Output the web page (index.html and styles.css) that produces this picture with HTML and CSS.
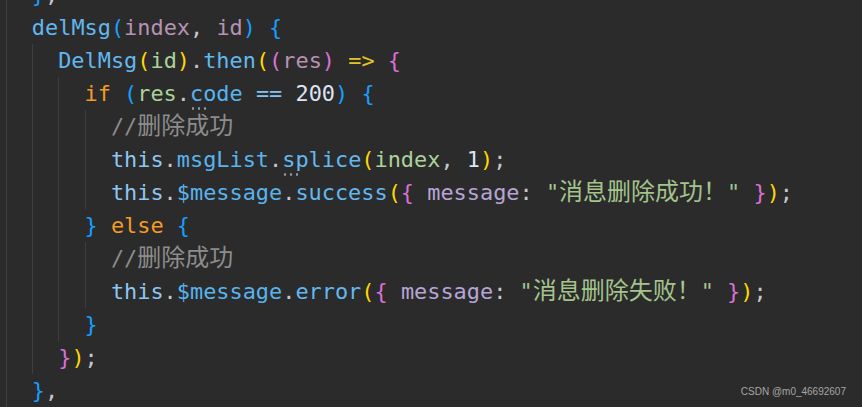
FILE: index.html
```html
<!DOCTYPE html>
<html lang="zh-CN">
<head>
<meta charset="utf-8">
<title>delMsg</title>
<link rel="stylesheet" href="styles.css">
</head>
<body>
<div class="editor">
  <div class="block">
    <div class="ln"><span class="b3">}</span><span class="p">,</span></div>
    <div class="ln"><span class="fn">delMsg</span><span class="b3">(</span><span class="pa">index</span><span class="p">, </span><span class="pa">id</span><span class="b3">)</span> <span class="b3">{</span></div>
    <div class="block">
      <div class="ln"><span class="fn">DelMsg</span><span class="b1">(</span><span class="va">id</span><span class="b1">)</span><span class="p">.</span><span class="fn">then</span><span class="b1">(</span><span class="b2">(</span><span class="pa">res</span><span class="b2">)</span> <span class="ar">=&gt;</span> <span class="b2">{</span></div>
      <div class="block">
        <div class="ln"><span class="kw">if</span> <span class="b3">(</span><span class="va">res</span><span class="p">.</span><span class="pr hint">code</span> <span class="op">==</span> <span class="nu">200</span><span class="b3">)</span> <span class="b3">{</span></div>
        <div class="block">
          <div class="ln"><span class="cm">//<span class="cjk">删除成功</span></span></div>
          <div class="ln"><span class="th">this</span><span class="p">.</span><span class="pr">msgList</span><span class="p">.</span><span class="fn hint">splice</span><span class="b1">(</span><span class="va">index</span><span class="p">, </span><span class="nu">1</span><span class="b1">)</span><span class="p">;</span></div>
          <div class="ln"><span class="th">this</span><span class="p">.</span><span class="pr">$message</span><span class="p">.</span><span class="fn">success</span><span class="b1">(</span><span class="b2">{</span> <span class="ke">message</span><span class="p">:</span> <span class="st">"<span class="cjk">消息删除成功！</span>"</span> <span class="b2">}</span><span class="b1">)</span><span class="p">;</span></div>
        </div>
        <div class="ln"><span class="b3">}</span> <span class="kw">else</span> <span class="b3">{</span></div>
        <div class="block">
          <div class="ln"><span class="cm">//<span class="cjk">删除成功</span></span></div>
          <div class="ln"><span class="th">this</span><span class="p">.</span><span class="pr">$message</span><span class="p">.</span><span class="fn">error</span><span class="b1">(</span><span class="b2">{</span> <span class="ke">message</span><span class="p">:</span> <span class="st">"<span class="cjk">消息删除失败！</span>"</span> <span class="b2">}</span><span class="b1">)</span><span class="p">;</span></div>
        </div>
        <div class="ln"><span class="b3">}</span></div>
      </div>
      <div class="ln"><span class="b2">}</span><span class="b1">)</span><span class="p">;</span></div>
    </div>
    <div class="ln"><span class="b3">}</span><span class="p">,</span></div>
  </div>
</div>
<div class="watermark">CSDN @m0_46692607</div>
</body>
</html>
```

FILE: styles.css
```css
html, body {
  margin: 0;
  padding: 0;
}

body {
  background: #2b2b2b;
  width: 862px;
  height: 407px;
  overflow: hidden;
}

.editor {
  margin-top: -22px;
  padding-left: 5.5px;
  font-family: "DejaVu Sans Mono", "Liberation Mono", monospace;
  font-size: 21.9px;
  line-height: 33px;
  color: #c8c8c8;
}

.block {
  border-left: 1px solid #3e3e3e;
  padding-left: calc(2ch - 1px);
}

.ln {
  white-space: pre;
  height: 33px;
}

.cjk {
  font-family: "Noto Sans CJK SC", "Noto Sans CJK JP", sans-serif;
  font-size: 24px;
  line-height: 20px;
}

.p { color: #c4c8ce; }
.fn { color: #62b8f0; }
.pr { color: #58b4ee; }
.th { color: #8fc6f2; }
.pa { color: #b693b2; }
.va { color: #aad29a; }
.ke { color: #b7a5d6; }
.kw { color: #f59b23; }
.nu { color: #dce4f5; }
.op { color: #84c4f6; }
.ar { color: #e6c229; }
.st { color: #a3c48c; }
.cm { color: #8c8c8c; }

.b1 { color: #ffd700; }
.b2 { color: #da70d6; }
.b3 { color: #179fff; }

.hint {
  position: relative;
}

.hint::after {
  content: "";
  position: absolute;
  left: 0;
  top: 100%;
  margin-top: 1px;
  width: 18px;
  height: 3px;
  background: radial-gradient(circle at center, #9a9a9a 0, #9a9a9a 1px, transparent 1.4px) 0 0 / 6px 3px repeat-x;
}

.watermark {
  position: absolute;
  right: 16px;
  bottom: 9px;
  font-family: "Liberation Sans", Arial, sans-serif;
  font-size: 10px;
  line-height: 12px;
  color: #a6a6a6;
}
```
